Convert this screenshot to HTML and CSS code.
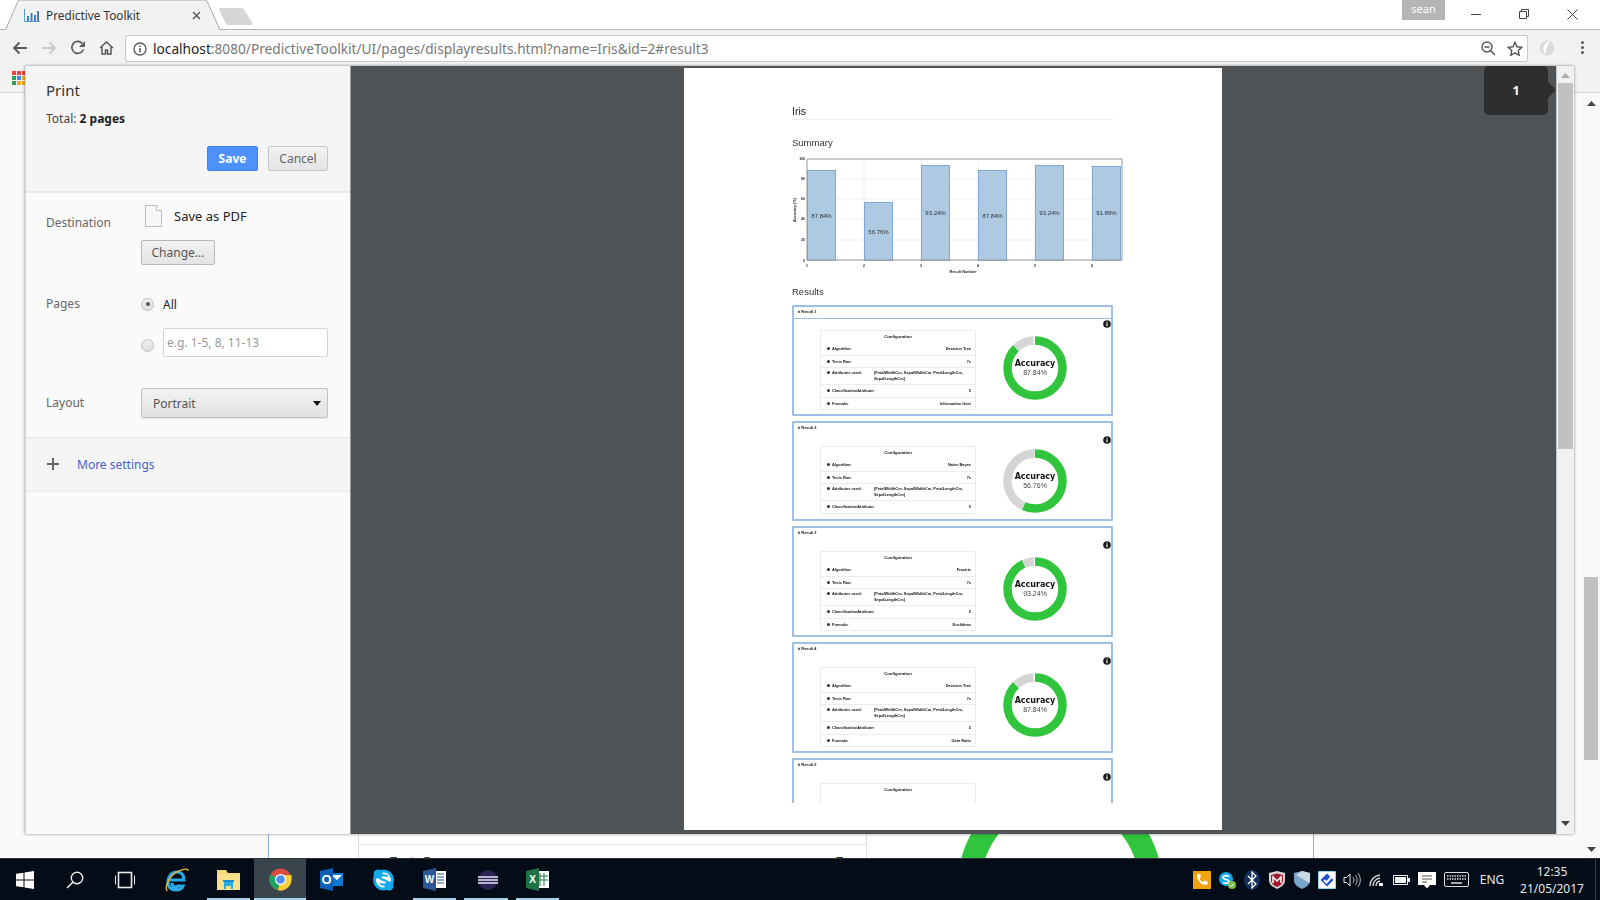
FILE: index.html
```html
<!DOCTYPE html>
<html lang="en">
<head>
<meta charset="utf-8">
<title>Predictive Toolkit</title>
<link rel="stylesheet" href="styles.css">
</head>
<body>
<div class="window">
  <header class="tabstrip">
    <div class="tab">
      <svg class="tab-shape" width="216" height="30" viewBox="0 0 216 30"><path d="M0.5 30 L13 1 Q13.5 0 15 0 L200 0 Q201.5 0 202 1 L215 30" fill="#f2f2f2" stroke="#a9a9a9"/></svg>
      <svg class="tab-icon" width="16" height="13" viewBox="0 0 16 13"><path d="M0.5 0V12.5H16" fill="none" stroke="#5b9bd5"/><path d="M3 7h2v5H3zM6.500 4h2v8h-2zM10 6h2v6h-2zM13 2h2v10h-2z" fill="#3f7fc4"/></svg>
      <span class="tab-title">Predictive Toolkit</span>
      <svg class="tab-close" width="9" height="9" viewBox="0 0 9 9"><path d="M1 1l7 7M8 1l-7 7" stroke="#5a5a5a" stroke-width="1.500"/></svg>
    </div>
    <svg class="newtab" width="36" height="18" viewBox="0 0 36 18"><path d="M1 1.500Q1 0 2.500 0H24Q25 0 26 1.500L34.500 15Q35 17 33 17H10Q8.500 17 8 16Z" fill="#d6d6d6"/></svg>
    <div class="user">sean</div>
    <div class="winctl">
      <svg width="10" height="10" viewBox="0 0 10 10"><path d="M0 5.500h10" stroke="#444"/></svg>
      <svg width="10" height="10" viewBox="0 0 10 10"><path d="M.5 2.500h7v7h-7zM2.500 2.500v-2h7v7h-2" fill="none" stroke="#444"/></svg>
      <svg width="11" height="11" viewBox="0 0 11 11"><path d="M.5.500l10 10M10.500.500l-10 10" stroke="#444"/></svg>
    </div>
  </header>

  <nav class="toolbar">
    <button class="navbtn"><svg width="16" height="14" viewBox="0 0 16 14"><path d="M15 7H2M7.500 1.500L2 7l5.500 5.500" fill="none" stroke="#5a5a5a" stroke-width="1.800"/></svg></button>
    <button class="navbtn"><svg width="16" height="14" viewBox="0 0 16 14"><path d="M1 7h13M8.500 1.500L14 7l-5.500 5.500" fill="none" stroke="#c8c8c8" stroke-width="1.800"/></svg></button>
    <button class="navbtn"><svg width="16" height="16" viewBox="0 0 16 16"><path d="M13.500 9.500A6 6 0 1 1 12.200 3.300" fill="none" stroke="#5a5a5a" stroke-width="1.700"/><path d="M15 1v6H9z" fill="#5a5a5a"/></svg></button>
    <button class="navbtn"><svg width="15" height="14" viewBox="0 0 15 14"><path d="M1 7L7.500 1 14 7M3 6v7h3.500V9h2v4H12V6" fill="none" stroke="#5a5a5a" stroke-width="1.500"/></svg></button>
    <div class="omnibox">
      <svg class="omni-info" width="14" height="14" viewBox="0 0 14 14"><circle cx="7" cy="7" r="6" fill="none" stroke="#555" stroke-width="1.300"/><path d="M7 6v4.500M7 3.500v1.500" stroke="#555" stroke-width="1.500"/></svg>
      <span class="url"><b class="url-host">localhost</b>:8080/PredictiveToolkit/UI/pages/displayresults.html?name=Iris&amp;id=2#result3</span>
      <svg class="omni-zoom" width="15" height="15" viewBox="0 0 15 15"><circle cx="6" cy="6" r="5" fill="none" stroke="#555" stroke-width="1.400"/><path d="M3.500 6h5M9.500 9.500L14 14" stroke="#555" stroke-width="1.500"/></svg>
      <svg class="omni-star" width="16" height="15" viewBox="0 0 16 15"><path d="M8 1.300l2 4.500 4.800.5-3.600 3.200 1 4.800L8 11.900l-4.200 2.400 1-4.800L1.200 6.300 6 5.800z" fill="none" stroke="#555" stroke-width="1.400"/></svg>
    </div>
    <svg class="ext" width="18" height="18" viewBox="0 0 18 18"><circle cx="9" cy="9" r="7.500" fill="#dcdcdc"/><path d="M12 2C5 4 4 11 7 16 8 11 9 6 12 2z" fill="#fff"/></svg>
    <div class="menu"><i></i><i></i><i></i></div>
  </nav>

  <div class="bookmarks">
    <div class="apps">
      <i class="c-r"></i><i class="c-r"></i><i class="c-r"></i>
      <i class="c-g"></i><i class="c-b"></i><i class="c-o"></i>
      <i class="c-g"></i><i class="c-o"></i><i class="c-o"></i>
    </div>
  </div>

  <main class="page">
    <div class="page-side"></div>
    <div class="page-card">
      <div class="page-table">
        <div class="page-row"><span>▲ Tests Ran:</span><span>7x</span></div>
      </div>
      <div class="page-donut">
        <svg width="240" height="66" viewBox="0 0 240 66"><circle cx="120" cy="51" r="90.500" fill="none" stroke="#31c53e" stroke-width="23"/></svg>
      </div>
    </div>
    <div class="page-scroll">
      <svg class="sb-up" width="9" height="5" viewBox="0 0 9 5"><path d="M4.500 0L9 5H0z" fill="#444"/></svg>
      <div class="page-thumb"></div>
      <svg class="sb-down" width="9" height="5" viewBox="0 0 9 5"><path d="M0 0h9L4.500 5z" fill="#444"/></svg>
    </div>
  </main>

  <footer class="taskbar">
    <div class="task task-sys"><svg width="18" height="18" viewBox="0 0 18 18"><path d="M0 2.800L7.500 1.700V8.500H0zM8.500 1.600L18 0V8.500H8.500zM0 9.500H7.500V16.300L0 15.200zM8.500 9.500H18V18L8.500 16.400z" fill="#fff"/></svg></div>
    <div class="task task-sys"><svg width="18" height="18" viewBox="0 0 18 18"><circle cx="11" cy="7" r="5.700" fill="none" stroke="#e8e8e8" stroke-width="1.400"/><path d="M7 11L1 17" stroke="#e8e8e8" stroke-width="1.600"/></svg></div>
    <div class="task task-sys task-last"><svg width="20" height="18" viewBox="0 0 20 18"><rect x="3.500" y="1.500" width="13" height="15" fill="none" stroke="#e8e8e8" stroke-width="1.600"/><path d="M.5 4.500v9M19.500 4.500v9" stroke="#e8e8e8"/></svg></div>
    <div class="task"><svg width="24" height="26" viewBox="0 0 24 26"><path d="M5 13h14c0-5-3-8-7-8-6 0-9 5-9 10 0 6 4 8 8 8 3 0 6-1 7-4h-5c-2 2-6 1-6-3" fill="none" stroke="#27a9e3" stroke-width="3.200"/><path d="M2 24C-1 18 6 7 14 4c5-2 9-3 9 0" fill="none" stroke="#e8b32e" stroke-width="1.400"/></svg></div>
    <div class="task task-open"><svg width="23" height="21" viewBox="0 0 23 21"><path d="M0 1h9l2 3h12v17H0z" fill="#f7d774"/><path d="M0 5h23v16H0z" fill="#fbe08b"/><path d="M7 12h9v8h-2v-3H9v3H7z" fill="#27a9e3"/><path d="M6 11h11v2H6z" fill="#1d8fce"/></svg></div>
    <div class="task task-open task-active"><svg width="23" height="23" viewBox="0 0 23 23"><circle cx="11.500" cy="11.500" r="11" fill="#dd4b3e"/><path d="M11.500 11.500L1.500 6.500A11 11 0 0 0 9 22.200z" fill="#1da462"/><path d="M11.500 11.500L9 22.200A11 11 0 0 0 22.500 11.500V7H11z" fill="#fdd13c"/><circle cx="11.500" cy="11.500" r="5.500" fill="#fff"/><circle cx="11.500" cy="11.500" r="4.300" fill="#4d8ef0"/></svg></div>
    <div class="task"><svg width="23" height="23" viewBox="0 0 23 23"><rect x="10" y="5" width="13" height="13" fill="#0f78d4"/><path d="M11 7l6 5 5-5" fill="#fff"/><path d="M0 3L13 0V23L0 20z" fill="#0a5fb4"/><text class="ico-t" x="6.500" y="15.500" text-anchor="middle">O</text></svg></div>
    <div class="task"><svg width="23" height="24" viewBox="0 0 23 24"><circle cx="11.500" cy="12" r="9" fill="#fff"/><circle cx="11.500" cy="12" r="9" fill="none" stroke="#12a9ec" stroke-width="3"/><circle cx="6" cy="6" r="4.500" fill="#12a9ec"/><circle cx="17" cy="18" r="4.500" fill="#12a9ec"/><path d="M15.500 8.500C13 6.500 8 7 8 9.500c0 3 7.500 2 7.500 5 0 2.500-5 3-7.500 1" fill="none" stroke="#12a9ec" stroke-width="2.200"/></svg></div>
    <div class="task task-open"><svg width="23" height="23" viewBox="0 0 23 23"><rect x="9" y="3" width="14" height="17" fill="#fff"/><path d="M14 6h7M14 9h7M14 12h7M14 15h7" stroke="#2b5797"/><path d="M0 3L13 0V23L0 20z" fill="#2b5797"/><text class="ico-t ico-s" x="6.500" y="15" text-anchor="middle">W</text></svg></div>
    <div class="task task-open"><svg width="24" height="26" viewBox="0 0 24 26"><path d="M13 1A12 12 0 0 0 13 25 12 12 0 0 1 13 1z" fill="#f7941e"/><circle cx="14" cy="13" r="10" fill="#2c2255"/><path d="M4 10h20M4 13h20M4 16h20" stroke="#e8e4f5" stroke-width="1.600"/></svg></div>
    <div class="task task-open"><svg width="23" height="23" viewBox="0 0 23 23"><rect x="9" y="3" width="14" height="17" fill="#fff"/><path d="M14 5v13M18 5v13M10 8h12M10 12h12" stroke="#1f7a45"/><path d="M0 3L13 0V23L0 20z" fill="#1f7244"/><text class="ico-t ico-s" x="6.500" y="15" text-anchor="middle">X</text></svg></div>

    <div class="tray">
      <div class="tr"><svg width="18" height="18" viewBox="0 0 18 18"><rect width="18" height="18" fill="#f0a30a"/><path d="M4 3l3 0 1 3-1.500 1.500c.5 1.500 2 3 3.500 3.500L11.500 9.500l3 1v3c-6 1.500-11-4-10.500-10.500z" fill="#fff"/></svg></div>
      <div class="tr"><svg width="18" height="18" viewBox="0 0 18 18"><circle cx="8" cy="8" r="7" fill="#12a9ec"/><path d="M11 5.500C9.500 4 5 4.500 5 6.500c0 2.500 6 1.500 6 4 0 2-4.500 2.500-6 1" fill="none" stroke="#fff" stroke-width="1.700"/><circle cx="14" cy="14" r="4" fill="#7ac143"/><path d="M12 14l1.500 1.500 2.500-3" fill="none" stroke="#fff"/></svg></div>
      <div class="tr"><svg width="18" height="20" viewBox="0 0 18 20"><ellipse cx="9" cy="10" rx="8" ry="10" fill="#12305a"/><path d="M5 6l8 8-4 4V2l4 4-8 8" fill="none" stroke="#fff" stroke-width="1.300"/></svg></div>
      <div class="tr"><svg width="18" height="18" viewBox="0 0 18 18"><path d="M1 2L9 0l8 2v7c0 5-4 7-8 9-4-2-8-4-8-9z" fill="#d8d8d8"/><path d="M3 4L9 2.500 15 4v5c0 4-3 5.500-6 7-3-1.500-6-3-6-7z" fill="#a3182a"/><path d="M5 12V6l4 4 4-4v6" fill="none" stroke="#fff" stroke-width="1.500"/></svg></div>
      <div class="tr"><svg width="18" height="18" viewBox="0 0 18 18"><path d="M1 2L9 0l8 2v7c0 5-4 7-8 9-4-2-8-4-8-9z" fill="#7aa7c7"/><path d="M9 0l8 2v7c0 1-.3 2-.6 3L3 4z" fill="#c9d8e2"/></svg></div>
      <div class="tr"><svg width="18" height="18" viewBox="0 0 18 18"><rect width="18" height="18" rx="1.500" fill="#fff" stroke="#2ad" stroke-width="1"/><path d="M9 2.500L15.500 9 9 15.500 2.500 9z" fill="#1d4fd8"/><path d="M6 9l2.500 2.500L16 3" fill="none" stroke="#fff" stroke-width="2"/></svg></div>
      <div class="tr"><svg width="18" height="16" viewBox="0 0 18 16"><path d="M1 5.500h2.500L7 2v12l-3.500-3.500H1z" fill="none" stroke="#e8e8e8"/><path d="M10 5c1.300 2 1.300 4 0 6M12.500 3c2 3 2 7 0 10M15 1c3 4 3 10 0 14" fill="none" stroke="#bbb"/></svg></div>
      <div class="tr"><svg width="16" height="14" viewBox="0 0 16 14"><path d="M1 13A11 11 0 0 1 11 2M4 13A8 8 0 0 1 11 5M7 13A5 5 0 0 1 11 8" fill="none" stroke="#ddd" stroke-width="1.300"/><rect x="10" y="10" width="4" height="3" fill="#eee"/></svg></div>
      <div class="tr"><svg width="17" height="10" viewBox="0 0 17 10"><rect x=".5" y=".5" width="14" height="9" fill="none" stroke="#eee"/><rect x="2" y="2" width="11" height="6" fill="#eee"/><path d="M15 3h2v4h-2z" fill="#eee"/></svg></div>
      <div class="tr"><svg width="18" height="18" viewBox="0 0 18 18"><path d="M0 1h18v13h-6l-3 3.500L6 14H0z" fill="#fff"/><path d="M4 5h10M4 8h10M4 11h5" stroke="#555"/></svg></div>
      <div class="tr tr-key"><svg width="25" height="15" viewBox="0 0 25 15"><rect x=".5" y=".5" width="24" height="14" rx="1.500" fill="none" stroke="#ddd"/><path d="M3 4h19M3 7h19" stroke="#ddd" stroke-width="1.500" stroke-dasharray="1.500 1"/><path d="M7 11h11" stroke="#ddd" stroke-width="1.500"/></svg></div>
      <div class="lang">ENG</div>
      <div class="clock"><span>12:35</span><span>21/05/2017</span></div>
      <div class="desk"></div>
    </div>
  </footer>

  <section class="dialog">
    <aside class="sidebar">
      <div class="side-head">
        <h1 class="print-title">Print</h1>
        <p class="print-total">Total: <b>2 pages</b></p>
        <div class="actions">
          <button class="btn btn-save">Save</button>
          <button class="btn btn-cancel">Cancel</button>
        </div>
      </div>

      <div class="set set-dest">
        <div class="label label-dest">Destination</div>
        <div class="dest-col">
          <div class="dest-line">
            <svg width="17" height="22" viewBox="0 0 17 22"><path d="M.5.500h11l5 5v16H.500z" fill="#f7f7f7" stroke="#bdbdbd"/><path d="M11.500.500v5h5" fill="#fff" stroke="#bdbdbd"/></svg>
            <span>Save as PDF</span>
          </div>
          <button class="btn btn-change">Change...</button>
        </div>
      </div>

      <div class="set set-pages">
        <div class="label label-pages">Pages</div>
        <div class="pages-col">
          <div class="radio-line"><span class="radio radio-on"></span><span>All</span></div>
          <div class="radio-line radio-line2"><span class="radio radio-low"></span><div class="range">e.g. 1-5, 8, 11-13</div></div>
        </div>
      </div>

      <div class="set set-layout">
        <div class="label label-layout">Layout</div>
        <div class="select"><span>Portrait</span><i class="caret"></i></div>
      </div>

      <div class="more">
        <svg width="12" height="12" viewBox="0 0 12 12"><path d="M6 0v12M0 6h12" stroke="#666" stroke-width="2"/></svg>
        <a class="more-link">More settings</a>
      </div>
    </aside>

    <div class="preview">
      <article class="sheet">
        <div class="sheet-inner">
          <h2 class="doc-title">Iris</h2>
          <h3 class="doc-h doc-summary">Summary</h3>
          <svg class="chart" width="340" height="133" viewBox="0 0 340 133">
            <g stroke="#efefef" stroke-width="1">
              <path d="M15 27H330M15 47H330M15 67H330M15 88H330M15 108H330"/>
              <path d="M72 7V108M129 7V108M186 7V108M243 7V108M300 7V108"/>
            </g>
            <g fill="#aec9e2" stroke="#7ea8cf" stroke-width="1">
              <rect x="15.500" y="18.500" width="28" height="90"/>
              <rect x="72.500" y="50.500" width="28" height="58"/>
              <rect x="129.500" y="13.500" width="28" height="95"/>
              <rect x="186.500" y="18.500" width="28" height="90"/>
              <rect x="243.500" y="13.500" width="28" height="95"/>
              <rect x="300.500" y="14.500" width="28" height="94"/>
            </g>
            <path d="M15 7H330V108H15z" fill="none" stroke="#9a9a9a"/>
            <g class="bar-label" text-anchor="middle">
              <text x="29.500" y="66">87.84%</text>
              <text x="86.500" y="82">56.76%</text>
              <text x="143.500" y="63">93.24%</text>
              <text x="200.500" y="66">87.84%</text>
              <text x="257.500" y="63">93.24%</text>
              <text x="314.500" y="63">91.89%</text>
            </g>
            <g class="tick" text-anchor="end">
              <text x="13" y="8">100</text><text x="13" y="28">80</text><text x="13" y="48">60</text><text x="13" y="68">40</text><text x="13" y="89">20</text><text x="13" y="110">0</text>
            </g>
            <g class="tick" text-anchor="middle">
              <text x="15" y="115">1</text><text x="72" y="115">2</text><text x="129" y="115">3</text><text x="186" y="115">4</text><text x="243" y="115">5</text><text x="300" y="115">6</text>
            </g>
            <text class="axis" x="171" y="121" text-anchor="middle">Result Number</text>
            <text class="axis" transform="translate(4 58) rotate(-90)" text-anchor="middle">Accuracy (%)</text>
          </svg>
          <h3 class="doc-h doc-results">Results</h3>

          <div class="card">
            <div class="card-head card-head-line"><span class="chev">«</span> Result 1</div>
            <div class="card-body">
              <div class="config">
                <div class="config-title">Configuration</div>
                <div class="crow"><span class="k">Algorithm:</span><span>Decision Tree</span></div>
                <div class="crow"><span class="k">Tests Ran:</span><span>7x</span></div>
                <div class="crow crow-tall"><span class="k k-attr">Attributes used:</span><span class="attrs">[PetalWidthCm, SepalWidthCm, PetalLengthCm, SepalLengthCm]</span></div>
                <div class="crow"><span class="k">ClassificationAttribute:</span><span>5</span></div>
                <div class="crow"><span class="k">Formula:</span><span>Information Gain</span></div>
              </div>
              <div class="donut donut-up">
                <svg width="64" height="64" viewBox="0 0 64 64"><g transform="rotate(-90 32 32)"><circle class="seg-g" cx="32" cy="32" r="27.500" pathLength="100" stroke-dasharray="11.160 88.840" stroke-dashoffset="-88.040"/><circle class="seg-v" cx="32" cy="32" r="27.500" pathLength="100" stroke-dasharray="87.840 12.160"/></g></svg>
                <div class="donut-text"><b>Accuracy</b><span>87.84%</span></div>
              </div>
              <svg class="info" width="8" height="8" viewBox="0 0 8 8"><circle cx="4" cy="4" r="3.800" fill="#1a1a1a"/><path d="M4 3.300v3M4 1.500v1" stroke="#fff" stroke-width="1.200"/></svg>
            </div>
          </div>

          <div class="card">
            <div class="card-head"><span class="chev">«</span> Result 2</div>
            <div class="card-body card-body-short">
              <div class="config">
                <div class="config-title">Configuration</div>
                <div class="crow"><span class="k">Algorithm:</span><span>Naive Bayes</span></div>
                <div class="crow"><span class="k">Tests Ran:</span><span>7x</span></div>
                <div class="crow crow-tall"><span class="k k-attr">Attributes used:</span><span class="attrs">[PetalWidthCm, SepalWidthCm, PetalLengthCm, SepalLengthCm]</span></div>
                <div class="crow"><span class="k">ClassificationAttribute:</span><span>5</span></div>
              </div>
              <div class="donut donut-down">
                <svg width="64" height="64" viewBox="0 0 64 64"><g transform="rotate(-90 32 32)"><circle class="seg-g" cx="32" cy="32" r="27.500" pathLength="100" stroke-dasharray="42.840 57.160" stroke-dashoffset="-56.960"/><circle class="seg-v" cx="32" cy="32" r="27.500" pathLength="100" stroke-dasharray="56.760 43.240"/></g></svg>
                <div class="donut-text"><b>Accuracy</b><span>56.76%</span></div>
              </div>
              <svg class="info" width="8" height="8" viewBox="0 0 8 8"><circle cx="4" cy="4" r="3.800" fill="#1a1a1a"/><path d="M4 3.300v3M4 1.500v1" stroke="#fff" stroke-width="1.200"/></svg>
            </div>
          </div>

          <div class="card">
            <div class="card-head"><span class="chev">«</span> Result 3</div>
            <div class="card-body">
              <div class="config">
                <div class="config-title">Configuration</div>
                <div class="crow"><span class="k">Algorithm:</span><span>Fractric</span></div>
                <div class="crow"><span class="k">Tests Ran:</span><span>7x</span></div>
                <div class="crow crow-tall"><span class="k k-attr">Attributes used:</span><span class="attrs">[PetalWidthCm, SepalWidthCm, PetalLengthCm, SepalLengthCm]</span></div>
                <div class="crow"><span class="k">ClassificationAttribute:</span><span>5</span></div>
                <div class="crow"><span class="k">Formula:</span><span>Euclidean</span></div>
              </div>
              <div class="donut donut-up">
                <svg width="64" height="64" viewBox="0 0 64 64"><g transform="rotate(-90 32 32)"><circle class="seg-g" cx="32" cy="32" r="27.500" pathLength="100" stroke-dasharray="5.960 94.040" stroke-dashoffset="-93.440"/><circle class="seg-v" cx="32" cy="32" r="27.500" pathLength="100" stroke-dasharray="93.240 6.760"/></g></svg>
                <div class="donut-text"><b>Accuracy</b><span>93.24%</span></div>
              </div>
              <svg class="info" width="8" height="8" viewBox="0 0 8 8"><circle cx="4" cy="4" r="3.800" fill="#1a1a1a"/><path d="M4 3.300v3M4 1.500v1" stroke="#fff" stroke-width="1.200"/></svg>
            </div>
          </div>

          <div class="card">
            <div class="card-head"><span class="chev">«</span> Result 4</div>
            <div class="card-body">
              <div class="config">
                <div class="config-title">Configuration</div>
                <div class="crow"><span class="k">Algorithm:</span><span>Decision Tree</span></div>
                <div class="crow"><span class="k">Tests Ran:</span><span>7x</span></div>
                <div class="crow crow-tall"><span class="k k-attr">Attributes used:</span><span class="attrs">[PetalWidthCm, SepalWidthCm, PetalLengthCm, SepalLengthCm]</span></div>
                <div class="crow"><span class="k">ClassificationAttribute:</span><span>5</span></div>
                <div class="crow"><span class="k">Formula:</span><span>Gain Ratio</span></div>
              </div>
              <div class="donut donut-up">
                <svg width="64" height="64" viewBox="0 0 64 64"><g transform="rotate(-90 32 32)"><circle class="seg-g" cx="32" cy="32" r="27.500" pathLength="100" stroke-dasharray="11.160 88.840" stroke-dashoffset="-88.040"/><circle class="seg-v" cx="32" cy="32" r="27.500" pathLength="100" stroke-dasharray="87.840 12.160"/></g></svg>
                <div class="donut-text"><b>Accuracy</b><span>87.84%</span></div>
              </div>
              <svg class="info" width="8" height="8" viewBox="0 0 8 8"><circle cx="4" cy="4" r="3.800" fill="#1a1a1a"/><path d="M4 3.300v3M4 1.500v1" stroke="#fff" stroke-width="1.200"/></svg>
            </div>
          </div>

          <div class="card">
            <div class="card-head"><span class="chev">«</span> Result 5</div>
            <div class="card-body">
              <div class="config config-open">
                <div class="config-title">Configuration</div>
              </div>
              <svg class="info" width="8" height="8" viewBox="0 0 8 8"><circle cx="4" cy="4" r="3.800" fill="#1a1a1a"/><path d="M4 3.300v3M4 1.500v1" stroke="#fff" stroke-width="1.200"/></svg>
            </div>
          </div>
        </div>
      </article>
      <div class="page-tip">1</div>
    </div>

    <div class="dlg-scroll">
      <svg class="sb-up2" width="9" height="5" viewBox="0 0 9 5"><path d="M4.500 0L9 5H0z" fill="#aaa"/></svg>
      <div class="dlg-thumb"></div>
      <svg class="sb-down2" width="9" height="5" viewBox="0 0 9 5"><path d="M0 0h9L4.500 5z" fill="#444"/></svg>
    </div>
  </section>
</div>
</body>
</html>
```

FILE: styles.css
```css
* { box-sizing: border-box; }
html, body { margin: 0; padding: 0; height: 100%; overflow: hidden; }
body { font-family: "Noto Sans", "Open Sans", sans-serif; color: #333; background: #fff; }
button { font: inherit; border: 0; background: none; padding: 0; margin: 0; }
h1, h2, h3, p { margin: 0; font-weight: 400; }

.window { position: relative; width: 1600px; height: 900px; display: flex; flex-direction: column; overflow: hidden; }

/* tab strip */
.tabstrip { height: 30px; flex: none; display: flex; align-items: flex-start; background: #fff; border-bottom: 1px solid #b5b5b5; }
.tab { position: relative; width: 216px; height: 30px; margin-left: 5px; display: flex; align-items: center; z-index: 1; }
.tab-shape { position: absolute; left: 0; top: 0; }
.tab-icon { position: relative; margin: 0 0 0 19px; }
.tab-title { position: relative; margin-left: 6px; font-size: 11.800px; color: #333; white-space: nowrap; }
.tab-close { position: relative; margin-left: auto; margin-right: 20px; }
.newtab { margin: 8px 0 0 -3px; }
.user { margin-left: 1148px; width: 43px; height: 20px; background: #b5b5b5; color: #fff; font-size: 11px; line-height: 18px; text-align: center; }
.winctl { margin-left: 26px; display: flex; gap: 38px; align-items: center; height: 28px; }

/* toolbar */
.toolbar { height: 35px; flex: none; display: flex; align-items: center; padding-left: 5px; background: #f2f2f2; }
.navbtn { width: 29px; height: 28px; display: flex; align-items: center; justify-content: center; }
.omnibox { width: 1403px; height: 27px; margin: 2px 0 0 4px; background: #fff; border: 1px solid #c8c8c8; border-radius: 2px; display: flex; align-items: center; padding: 0 4px 0 7px; }
.url { margin-left: 6px; font-size: 13.700px; color: #777; white-space: nowrap; }
.url-host { font-weight: 400; color: #222; }
.omni-zoom { margin-left: auto; }
.omni-star { margin-left: 11px; }
.ext { margin-left: 10px; }
.menu { margin-left: 25px; display: flex; flex-direction: column; gap: 2px; }
.menu i { display: block; width: 3px; height: 3px; border-radius: 50%; background: #5a5a5a; }

/* bookmarks */
.bookmarks { height: 28px; flex: none; background: #f2f2f2; border-bottom: 1px solid #d4d4d4; padding: 6px 0 0 12px; }
.apps { display: grid; grid-template-columns: repeat(3, 4px); grid-auto-rows: 4px; gap: 1px; }
.apps i { display: block; }
.c-r { background: #ef4438; }
.c-g { background: #2e9e57; }
.c-b { background: #3d8bf0; }
.c-o { background: #f3ac1f; }

/* page behind the dialog */
.page { flex: 1; display: flex; background: #fafafa; min-height: 0; }
.page-side { width: 268px; flex: none; }
.page-card { width: 1046px; flex: none; background: #fff; border-left: 1px solid #8eb3d9; border-right: 1px solid #8eb3d9; display: flex; align-items: flex-start; padding-left: 89px; overflow: hidden; }
.page-table { width: 509px; flex: none; height: 100%; margin-top: 742px; border-left: 1px solid #ddd; border-right: 1px solid #ddd; }
.page-row { margin-top: 9px; padding: 0 16px; border-top: 1px solid #e6e6e6; height: 30px; display: flex; justify-content: space-between; font-size: 12px; font-weight: 700; color: #333; padding-top: 8px; }
.page-donut { margin: 740px 0 0 73px; flex: none; }
.page-scroll { width: 17px; margin-left: 269px; flex: none; position: relative; background: #f8f8f8; display: flex; flex-direction: column; align-items: center; padding-top: 8px; }
.page-thumb { position: absolute; left: 1px; top: 484px; width: 14px; height: 183px; background: #c1c1c1; }
.sb-down { margin-top: auto; margin-bottom: 6px; }

/* taskbar */
.taskbar { height: 42px; flex: none; background: #030c17; border-top: 1px solid #2f3338; display: flex; align-items: center; padding-left: 0; }
.task { width: 51.500px; height: 41px; display: flex; align-items: center; justify-content: center; position: relative; flex: none; }
.task-sys { width: 50px; }
.task-last { margin-right: 1.250px; }
.task-open::after { content: ""; position: absolute; left: 4px; right: 4px; bottom: 0; height: 2.500px; background: #a8d1ef; }
.task-active { background: #3a444c; }
.task-active::after { left: 0; right: 0; }
.ico-t { font-family: "Liberation Sans", sans-serif; font-size: 13px; font-weight: 700; fill: #fff; }
.ico-s { font-size: 10px; }
.tray { margin-left: auto; display: flex; align-items: center; height: 41px; }
.tr { width: 25px; display: flex; align-items: center; justify-content: center; flex: none; }
.tr-key { width: 34px; }
.lang { width: 38px; text-align: center; color: #e8e8e8; font-size: 12px; }
.clock { width: 86px; margin-left: -2px; display: flex; flex-direction: column; align-items: center; color: #e8e8e8; font-size: 12px; line-height: 17px; }
.desk { width: 5px; height: 41px; border-left: 1px solid #3a3f45; }

/* dialog */
.dialog { position: absolute; left: 25px; top: 66px; width: 1549px; height: 768px; display: flex; box-shadow: 0 0 3px rgba(0,0,0,.45); background: #fafafa; }
.sidebar { width: 325px; flex: none; background: #fafafa; border-left: 1px solid #d8d8d8; font-size: 12px; }
.side-head { height: 127px; background: #f5f5f5; border-bottom: 2px solid #e9e9e9; padding: 13px 22px 0 20px; }
.print-title { font-size: 15px; line-height: 22px; color: #333; }
.print-total { margin-top: 9px; font-size: 12px; line-height: 18px; color: #444; }
.print-total b { color: #222; }
.actions { margin-top: 18px; display: flex; justify-content: flex-end; gap: 10px; }
.btn { height: 25px; border-radius: 2px; font-size: 12px; }
.btn-save { width: 51px; background: #4d90fe; border: 1px solid #3d80ee; color: #fff; font-weight: 700; }
.btn-cancel { width: 60px; background: linear-gradient(#f2f2f2, #e4e4e4); border: 1px solid #c6c6c6; color: #666; }
.btn-change { width: 74px; background: linear-gradient(#f2f2f2, #e4e4e4); border: 1px solid #b8b8b8; color: #555; margin-top: 13px; display: block; }

.set { display: grid; grid-template-columns: 95px 1fr; padding: 0 22px 0 20px; }
.label { color: #666; line-height: 18px; }
.label-dest { padding-top: 9px; }
.set-dest { padding-top: 12px; }
.dest-line { display: flex; align-items: center; height: 22px; margin-left: 4px; gap: 12px; color: #222; font-size: 13px; }
.set-pages { margin-top: 29px; }
.label-pages { line-height: 20px; }
.radio-line { display: flex; align-items: center; gap: 9px; height: 20px; color: #222; }
.radio-line2 { margin-top: 14px; height: 29px; gap: 9px; }
.radio { width: 13px; height: 13px; flex: none; border-radius: 50%; border: 1px solid #c0c0c0; background: linear-gradient(#f0f0f0, #dedede); display: flex; align-items: center; justify-content: center; }
.radio-on::after { content: ""; width: 4px; height: 4px; border-radius: 50%; background: #555; }
.radio-low { margin-top: 5px; }
.range { width: 165px; height: 29px; flex: none; background: #fff; border: 1px solid #d4d4d4; border-radius: 2px; padding-left: 3px; line-height: 27px; color: #999; font-size: 12px; }
.set-layout { margin-top: 31px; }
.label-layout { line-height: 30px; }
.select { height: 30px; background: linear-gradient(#f2f2f2, #e2e2e2); border: 1px solid #c2c2c2; border-radius: 2px; display: flex; align-items: center; justify-content: space-between; padding: 0 6px 0 11px; color: #555; box-shadow: 0 1px 1px rgba(0,0,0,.08); }
.caret { width: 0; height: 0; border-left: 4.500px solid transparent; border-right: 4.500px solid transparent; border-top: 5px solid #111; }
.more { margin-top: 19px; height: 55px; background: #f5f5f5; border-top: 2px solid #ededed; border-bottom: 2px solid #ededed; display: flex; align-items: center; padding: 0 0 1px 21px; gap: 18px; }
.more-link { color: #4a5fd0; }

/* preview */
.preview { flex: 1; min-width: 0; position: relative; background: #505457; padding: 2px 0 0 333px; border-left: 1px solid #9a9a9a; }
.sheet { width: 538px; height: 762px; background: #fff; }
.sheet-inner { height: 735px; overflow: hidden; padding: 36px 0 0 108px; width: 538px; font-family: "Liberation Sans", Arial, sans-serif; filter: blur(.35px); }
.doc-title { width: 321px; font-size: 10.500px; line-height: 14px; padding-bottom: 1px; height: 16px; border-bottom: 1px solid #eee; color: #222; }
.doc-h { font-size: 9.500px; line-height: 14px; color: #333; }
.doc-summary { margin-top: 16px; }
.doc-results { margin-bottom: 6px; }
.chart { display: block; margin-top: 2px; }
.bar-label text { font-size: 6px; fill: #333; }
.tick text { font-size: 3.500px; font-weight: 700; fill: #222; }
.axis { font-size: 3.800px; font-weight: 700; fill: #222; }

.card { width: 321px; margin-bottom: 5px; border: 2px solid #9dbfe3; border-radius: 1px; background: #fff; }
.card-head { height: 12px; padding-left: 3.500px; border-bottom: 1px solid transparent; font-size: 3.900px; font-weight: 700; line-height: 9.500px; color: #111; }
.card-head-line { border-bottom-color: #9dbfe3; }
.chev { font-size: 5px; }
.card-body { display: flex; align-items: flex-start; padding: 11px 0 4px 26px; position: relative; }
.card-body-short { padding-bottom: 5.500px; }
.config { width: 156px; flex: none; border: 1px solid #ececec; border-radius: 1px; font-size: 3.900px; font-weight: 700; color: #111; }
.config-open { height: 60px; }
.config-title { height: 11px; line-height: 11px; text-align: center; font-size: 4.200px; }
.crow { height: 12.500px; border-top: 1px solid #ececec; display: flex; justify-content: space-between; align-items: center; padding: 0 4px 0 6px; }
.config-title + .crow { border-top-color: transparent; }
.crow-tall { height: 17px; align-items: flex-start; justify-content: flex-start; padding-top: 2px; }
.k::before { content: ""; display: inline-block; width: 3px; height: 3px; border-radius: 50%; background: #333; margin-right: 2px; vertical-align: 0; }
.k-attr { width: 47px; flex: none; }
.attrs { width: 100px; line-height: 5.500px; }
.donut { position: relative; width: 64px; height: 64px; margin-left: 27px; flex: none; align-self: center; }
.donut-up { margin-bottom: 4px; }
.donut-down { margin-top: 3px; }
.donut svg { display: block; }
.seg-g, .seg-v { fill: none; stroke-width: 8.500; }
.seg-g { stroke: #d5d5d5; }
.seg-v { stroke: #31c53e; }
.donut-text { position: absolute; left: 0; right: 0; top: 23px; display: flex; flex-direction: column; align-items: center; }
.donut-text b { font-family: "DejaVu Sans", sans-serif; font-size: 8px; line-height: 9px; color: #111; }
.donut-text span { font-size: 7px; line-height: 9px; color: #444; }
.info { position: absolute; right: 0; top: 1px; }
.page-tip { position: absolute; left: 1133px; top: 0; width: 64px; height: 49px; background: #2d2e30; border-radius: 5px; color: #fff; font-size: 12.500px; font-weight: 700; display: flex; align-items: center; justify-content: center; }
.page-tip::after { content: ""; position: absolute; left: 100%; top: 16px; border-left: 8px solid #2d2e30; border-top: 8px solid transparent; border-bottom: 8px solid transparent; }

/* dialog scrollbar */
.dlg-scroll { width: 18px; flex: none; background: #f1f1f1; display: flex; flex-direction: column; align-items: center; padding-top: 7px; border-left: 1px solid #c8c8c8; position: relative; }
.dlg-thumb { width: 15px; height: 366px; margin-top: 5px; background: #c1c1c1; }
.sb-down2 { margin-top: auto; margin-bottom: 8px; }
```
